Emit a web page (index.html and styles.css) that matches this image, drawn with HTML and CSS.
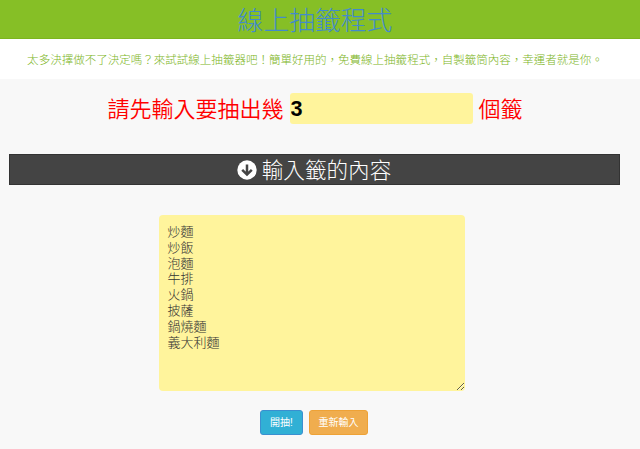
FILE: index.html
```html
<!DOCTYPE html>
<html lang="zh-Hant">
<head>
  <meta charset="UTF-8">
  <title>線上抽籤程式</title>
  <link rel="stylesheet" href="styles.css">
</head>
<body>
  <header class="header">
    <h1><a href="#">線上抽籤程式</a></h1>
  </header>
  <p class="intro">太多決擇做不了決定嗎？來試試線上抽籤器吧！簡單好用的，免費線上抽籤程式，自製籤筒內容，幸運者就是你。</p>

  <form class="container">
    <div class="count">
      <label for="num">請先輸入要抽出幾</label>
      <input type="text" id="num" class="num" value="3">
      <span>個籤</span>
    </div>

    <h2 class="bar">
      <svg class="icon" viewBox="0 0 20 20">
        <circle cx="10" cy="10" r="9.7" fill="#fff"/>
        <path d="M10 4.5v10M5.2 9.8L10 14.6l4.8-4.8" fill="none" stroke="#444" stroke-width="2.5"/>
      </svg>
      <span>輸入籤的內容</span>
    </h2>

    <textarea class="items" spellcheck="false">炒麵
炒飯
泡麵
牛排
火鍋
披薩
鍋燒麵
義大利麵</textarea>

    <div class="buttons">
      <button type="button" class="btn btn-info">開抽!</button>
      <button type="reset" class="btn btn-warning">重新輸入</button>
    </div>
  </form>
</body>
</html>
```
FILE: styles.css
```css
* {
  box-sizing: border-box;
}
body {
  margin: 0;
  background-color: #f8f8f8;
  font-family: "Liberation Sans", "Noto Sans CJK TC", sans-serif;
  font-weight: 300;
  overflow: hidden;
}
.header {
  height: 39px;
  padding-right: 10px;
  background-color: #86bf26;
  border-bottom: 1px solid #7cb51e;
  text-align: center;
}
.header h1 {
  margin: 0;
  font-family: "Noto Sans CJK TC", sans-serif;
  font-size: 25.8px;
  font-weight: 300;
  line-height: 37px;
}
.header a {
  color: #428bca;
  text-decoration: none;
}
.intro {
  height: 40px;
  margin: 0;
  padding-right: 10px;
  background-color: #fff;
  color: #7db51c;
  font-family: "Noto Sans CJK TC", sans-serif;
  font-size: 11.52px;
  line-height: 41px;
  text-align: center;
  white-space: nowrap;
}
.container {
  display: flex;
  flex-direction: column;
  align-items: center;
  width: 611px;
  margin-left: 9px;
  padding-top: 14px;
}
.count {
  display: flex;
  align-items: center;
  gap: 6px;
  height: 31px;
  padding-left: 1px;
  color: #f00;
  font-family: "Noto Sans CJK TC", sans-serif;
  font-size: 22px;
  font-weight: 350;
  line-height: 29px;
}
.count label,
.count span {
  padding-bottom: 2px;
}
.num {
  width: 183px;
  height: 31px;
  padding: 0 1px;
  border: none;
  border-radius: 3px;
  background-color: #fff49c;
  color: #000;
  font-family: "Liberation Sans", sans-serif;
  font-size: 21.6px;
  font-weight: bold;
}
.bar {
  display: flex;
  align-items: center;
  justify-content: center;
  gap: 5px;
  width: 611px;
  height: 31px;
  margin: 30px 0 0;
  padding-right: 1px;
  border: 1px solid #333;
  background-color: #444;
  color: #fff;
  font-family: "Noto Sans CJK TC", sans-serif;
  font-size: 21.6px;
  font-weight: 300;
  line-height: 27px;
}
.bar span {
  padding-bottom: 3px;
}
.icon {
  width: 20px;
  height: 20px;
}
.items {
  width: 306px;
  height: 176px;
  margin: 30px 0 0 -6px;
  padding: 8px 9px;
  border: none;
  border-radius: 4px;
  background-color: #fff49c;
  color: #333;
  font-family: "Noto Sans CJK TC", sans-serif;
  font-size: 13px;
  font-weight: 300;
  line-height: 15.8px;
}
.buttons {
  display: flex;
  gap: 6px;
  margin-top: 19px;
  padding-right: 1px;
}
.btn {
  height: 25px;
  padding: 0 8px;
  border: 1px solid #eea236;
  border-radius: 3px;
  background-color: #f0ad4e;
  color: #fff;
  font-family: "Liberation Sans", "Noto Sans CJK TC", sans-serif;
  font-size: 10px;
  line-height: 22px;
}
.btn-info {
  width: 43px;
  border-color: #3b8fd0;
  background-color: #31b0d5;
}
.btn-warning {
  width: 59px;
}
```
